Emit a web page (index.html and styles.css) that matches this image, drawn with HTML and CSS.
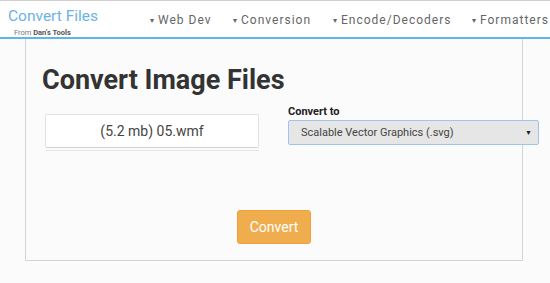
FILE: index.html
```html
<!DOCTYPE html>
<html lang="en">
<head>
    <meta charset="UTF-8">
    <meta name="viewport" content="width=device-width, initial-scale=1.0">
    <title>Convert Image Files</title>
    <link rel="stylesheet" href="styles.css">
</head>
<body>

    <!-- Barre du haut -->
    <div class="header">
        <div class="brand">
            <div class="brand-name">Convert Files</div>
            <div class="brand-from">From <strong>Dan's Tools</strong></div>
        </div>
        <ul class="nav">
            <li class="nav-web"><span class="caret">&#9662;</span>Web Dev</li>
            <li class="nav-conv"><span class="caret">&#9662;</span>Conversion</li>
            <li class="nav-enc"><span class="caret">&#9662;</span>Encode/Decoders</li>
            <li class="nav-fmt"><span class="caret">&#9662;</span>Formatters</li>
        </ul>
    </div>

    <div class="container">
        <h1>Convert Image Files</h1>

        <div class="row">
            <div class="file-col">
                <div class="file-box">(5.2 mb) 05.wmf</div>
                <div class="file-bar"></div>
            </div>
            <div class="select-col">
                <label for="format">Convert to</label>
                <div class="select">
                    <span>Scalable Vector Graphics (.svg)</span>
                    <span class="arrow">&#9660;</span>
                </div>
            </div>
        </div>

        <div class="actions">
            <button type="button">Convert</button>
        </div>
    </div>

</body>
</html>
```

FILE: styles.css
```css
body {
    font-family: Roboto, "Liberation Sans", Arial, sans-serif;
    background-color: #fbfbfb;
    margin: 0;
    padding: 0;
    color: #333;
}
.header {
    display: flex;
    align-items: flex-start;
    height: 36px;
    background-color: #fff;
    border-top: 1px solid #cfcfcf;
    border-bottom: 2px solid #5db6e6;
}
.brand {
    padding: 5px 0 0 8px;
    width: 142px;
}
.brand-name {
    font-size: 15.5px;
    line-height: 20px;
    color: #6cb2e6;
}
.brand-from {
    font-size: 7.5px;
    color: #777;
    margin: 2px 0 0 6px;
}
.brand-from strong {
    color: #555;
}
.nav {
    display: flex;
    list-style: none;
    margin: 0;
    padding: 12px 0 0 0;
    font-size: 12px;
    letter-spacing: 1px;
    color: #666;
}
.nav li {
    white-space: nowrap;
}
.caret {
    font-size: 8px;
    letter-spacing: 0;
    margin-right: 4px;
    vertical-align: 1px;
}
.nav-web { width: 83px; }
.nav-conv { width: 100px; }
.nav-enc { width: 139px; }
.container {
    margin-left: 25px;
    width: 496px;
    height: 197px;
    padding-top: 24px;
    border: 1px solid #d4d4d4;
    border-top: none;
}
h1 {
    margin: 0 0 0 16px;
    font-size: 27px;
    line-height: 34px;
    font-weight: bold;
    color: #333;
}
.row {
    display: flex;
    margin-top: 17px;
}
.file-col {
    margin-left: 19px;
    width: 214px;
    flex-shrink: 0;
}
.file-box {
    height: 32px;
    line-height: 32px;
    text-align: center;
    font-size: 14px;
    color: #444;
    background-color: #fff;
    border: 1px solid #e2e2e2;
    border-bottom: 1px solid #d2d2d2;
    border-radius: 2px;
}
.file-bar {
    margin-top: 2px;
    margin-left: 1px;
    height: 1px;
    background-color: #e6e6e6;
}
.select-col {
    margin-left: 29px;
    margin-top: -9px;
    width: 251px;
    flex-shrink: 0;
}
label {
    display: block;
    font-size: 11px;
    font-weight: bold;
    color: #222;
    margin-bottom: 2px;
}
.select {
    display: flex;
    justify-content: space-between;
    align-items: center;
    height: 23px;
    padding: 0 6px 0 12px;
    font-size: 11px;
    color: #444;
    background-color: #e6e6e6;
    border: 1px solid #9fc3ea;
    border-radius: 2px;
}
.arrow {
    font-size: 7px;
    color: #222;
}
.actions {
    text-align: center;
    margin-top: 59px;
}
button {
    background-color: #f0ad4e;
    color: white;
    border: 1px solid #eea236;
    width: 74px;
    height: 34px;
    font-family: Roboto, "Liberation Sans", Arial, sans-serif;
    font-size: 14px;
    border-radius: 3px;
    cursor: pointer;
}
```
